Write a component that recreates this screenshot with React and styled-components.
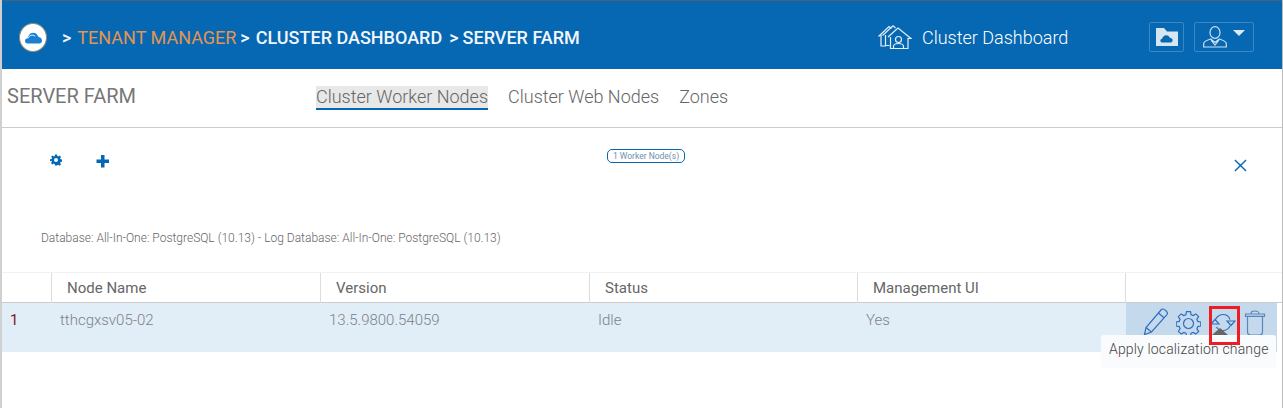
import React from "react";
import styled, { createGlobalStyle } from "styled-components";

const Global = createGlobalStyle`
  html, body { margin: 0; padding: 0; background: #fff; }
  body { font-family: Roboto, "Liberation Sans", sans-serif; width: 1283px; height: 408px; overflow: hidden; }
`;
const Page = styled.div`
  width: 1283px; height: 408px; display: flex; flex-direction: column;
  border-left: 2px solid #d0d0d0; border-right: 1px solid #bbb; box-sizing: border-box; position: relative; overflow: hidden;
`;
const Header = styled.header`
  height: 69px; margin-left: -2px; background: #0667b3; border-top: 1px solid #4d5f70; box-sizing: border-box;
  display: flex; align-items: center; padding: 4px 0 0 19px; color: #fff; flex: none;
`;
const LogoBadge = styled.div`
  width: 28px; height: 29px; border-radius: 50%; background: #fff; border: 1px solid #8f8d7c; box-sizing: border-box;
  display: flex; align-items: center; justify-content: center; flex: none; margin-right: 15px;
`;
const Crumbs = styled.nav`
  display: flex; align-items: center; font-size: 18px; font-weight: 500; white-space: nowrap; flex: none; width: 816px;
`;
const Crumb = styled.span`
  color: ${p => p.$accent ? "#e4954f" : "#f2f6fa"};
  font-weight: ${p => p.$accent ? 400 : 500};
  margin-left: ${p => p.$gap || 0}px;
`;
const DashLink = styled.div`
  display: flex; align-items: center; gap: 10px; font-size: 18px; font-weight: 300; color: #fff; width: 271px; flex: none;
`;
const IconButton = styled.button`
  height: 30px; width: ${p => p.$w}px; background: transparent; border: 1px solid #3d86c2; border-radius: 2px;
  display: flex; align-items: center; justify-content: center; gap: 6px; padding: 0; margin-right: ${p => p.$mr || 0}px;
`;
const Caret = styled.span`
  width: 0; height: 0; border-left: 6.500px solid transparent; border-right: 6.500px solid transparent;
  border-top: 6px solid #dce9f4; margin-top: -8px;
`;
const TabBar = styled.div`
  height: 59px; display: flex; align-items: center; border-bottom: 1px solid #ccc; box-sizing: border-box; flex: none;
`;
const Title = styled.h1`
  margin: 0 0 5px 5px; width: 309px; font-size: 20px; font-weight: 400; color: #777; flex: none;
`;
const Tab = styled.div`
  font-size: 18px; font-weight: 300; color: #666; box-sizing: border-box; height: 24px; line-height: 21px; margin: -1px 20px 0 0;
  ${p => p.$active && "background: #e8e8e8; border-bottom: 2px solid #0667b3;"}
`;
const Tools = styled.section`
  height: 144px; flex: none; display: flex; flex-direction: column; position: relative;
`;
const ToolRow = styled.div`
  display: grid; grid-template-columns: 46px 46px 1fr; padding: 26px 0 0 48px; height: 52px; box-sizing: border-box;
`;
const Badge = styled.span`
  justify-self: start; margin: -5px 0 0 465px; height: 14px; width: 78px; box-sizing: border-box; border: 1px solid #0667b3; border-radius: 5px;
  font-size: 8.5px; line-height: 12px; text-align: center; color: #6f8fac; white-space: nowrap;
`;
const Close = styled.div`
  position: absolute; right: 35px; top: 31px; line-height: 0;
`;
const DbLine = styled.p`
  margin: 51px 0 0 39px; font-size: 12px; font-weight: 300; color: #666;
`;
const HeadRow = styled.div`
  display: grid; grid-template-columns: 49px 269px 269px 268px 268px 1fr; height: 31px; flex: none;
  border-top: 1px solid #f2f2f2; border-bottom: 1px solid #ccc; box-sizing: border-box;
`;
const HeadCell = styled.div`
  font-size: 15px; color: #666; line-height: 31px; padding-left: 15px;
  border-left: ${p => p.$first ? "none" : "1px solid #ddd"};
`;
const BodyRow = styled.div`
  position: relative; display: grid; grid-template-columns: 49px 269px 269px 268px 268px 1fr; height: 49px; background: #e1edf7; flex: none; margin-right: 5px;
`;
const BodyCell = styled.div`
  font-size: 15px; font-weight: ${p => p.$idx ? 400 : 300}; color: ${p => p.$idx ? "#7a1a1a" : "#7d8287"}; line-height: 34px; padding-left: ${p => p.$idx ? 8 : 9}px;
`;
const Actions = styled.div`
  background: #c5d9ec; display: flex; align-items: flex-start; gap: 8px; padding: 4px 0 0 17px; margin-left: 1px;
`;
const Highlight = styled.div`
  position: absolute; z-index: 2; left: 1207px; top: 3px; width: 31px; height: 39px; border: 3px solid #ee1c25; box-sizing: border-box; pointer-events: none;
`;
const Tooltip = styled.div`
  position: absolute; left: 1099px; top: 335px; width: 175px; height: 33px; background: #fafbfc; border-radius: 3px;
  font-size: 14px; font-weight: 300; line-height: 29px; color: #444; padding-left: 8px; box-sizing: border-box; white-space: nowrap; letter-spacing: .16px;
  &::before { content: ""; position: absolute; left: 111px; top: -7px; width: 0; height: 0;
    border-left: 8px solid transparent; border-right: 8px solid transparent; border-bottom: 7px solid #666; }
`;

const Cloud = () => (
  <svg width="17" height="13" viewBox="0 0 20 15">
    <path fill="#1a7fd0" d="M3 14.500C1 14.500 0 13 0 11.500 0 9.500 1.500 8.500 3 8.300 4 5 6 2.500 9 2c3-.5 6 1.500 7 5 2.500.4 4 2 4 4.200 0 2-1.500 3.300-3.500 3.300Z" />
    <path fill="none" stroke="#fff" strokeWidth="1.100" d="M3.500 8.500C5 5 9 3.500 12 6M6.500 1.500C9 0 14 1 15.500 5.500" />
  </svg>
);
const HomeIcon = () => (
  <svg width="34" height="24" viewBox="0 0 34 24" fill="none" stroke="#e6eff7" strokeWidth="1.200">
    <path d="M.5 11.500 11 1.500l2.500 2M3 10v11h5M4.500 10.500 15 .8l2.500 2.200M7.500 10v10.500h4" />
    <path d="M10 12 20 3l13 10.500h-3V23.500H12.500V12" />
    <path d="M15.500 23.500v-2c0-2 2-3 5-3s5 1 5 3v2" />
    <circle cx="20.500" cy="14.500" r="3" />
  </svg>
);
const FolderCloud = () => (
  <svg width="22" height="18" viewBox="0 0 22 18">
    <path fill="#d5e5f2" d="M0 0h8l3 3.500h11V18H0Z" />
    <path fill="#0667b3" d="M6.500 14.500c-2.500 0-3-3.500-.3-3.800C6.700 8.300 9 6.800 11.500 7.500c1.300.4 2 1.300 2.500 2.500 3-.4 3.800 4 .7 4.500Z" />
  </svg>
);
const UserIcon = () => (
  <svg width="24" height="22" viewBox="0 0 24 22" fill="none" stroke="#cfe0ef" strokeWidth="1.200">
    <ellipse cx="12" cy="6.500" rx="5" ry="5.800" />
    <path d="M.7 21v-3.500c0-2 4-3.500 7-4.500l4.300 3.500 4.300-3.500c3 1 7 2.500 7 4.500V21ZM8 14l4 5 4-5" />
  </svg>
);
const Gear = ({ size = 16, color = "#0667b3" }) => (
  <svg width={size} height={size} viewBox="0 0 24 24">
    <path fill={color} fillRule="evenodd" d="M10 1h4l.6 3.200 2 .9L19.300 3.200l2.800 2.800-1.900 2.700.9 2 3.200.6v4l-3.200.6-.9 2 1.900 2.700-2.800 2.800-2.700-1.900-2 .9L14 23h-4l-.6-3.200-2-.9-2.700 1.900-2.800-2.800 1.900-2.700-.9-2L0 14.700v-4l3.200-.6.900-2L2.200 5.400 5 3.200l2.700 1.900 2-.9ZM12 8a4 4 0 1 0 0 8 4 4 0 0 0 0-8Z" />
  </svg>
);
const Plus = () => (
  <svg width="14" height="14" viewBox="0 0 14 14"><path fill="#0667b3" d="M5 1h3.500v4.500H13V9H8.500v4.500H5V9H.5V5.500H5Z" /></svg>
);
const X = () => (
  <svg width="13" height="13" viewBox="0 0 14 14" stroke="#0667b3" strokeWidth="1.500"><path d="M1 1l12 12M13 1 1 13" /></svg>
);
const Pencil = () => (
  <svg width="25" height="29" viewBox="0 0 25 29" fill="none" stroke="#2f6fc0" strokeWidth="1.200">
    <path d="M1.500 27.500l1.500-7L18 3c1-1.200 2.500-1.300 3.500-.4l2 1.700c1 1 1.100 2.400.2 3.500L8.500 25ZM15.500 6l6 5.200M3 20.500 8.500 25" />
  </svg>
);
const GearLine = () => (
  <svg width="25" height="29" viewBox="0 0 25 29" fill="none" stroke="#2f6fc0" strokeWidth="1.200">
    <g transform="translate(0 4)">
      <path d="M10.500.7h4l.6 3 2.100.9 2.600-1.700 2.800 2.800-1.700 2.600.9 2.100 3 .6v4l-3 .6-.9 2.100 1.700 2.600-2.800 2.800-2.600-1.700-2.100.9-.6 2.300h-4l-.6-2.300-2.100-.9-2.600 1.700-2.800-2.800 1.700-2.600-.9-2.100-3-.6v-4l3-.6.9-2.100L2.300 5.700l2.800-2.800 2.600 1.700 2.100-.9Z" />
      <circle cx="12.500" cy="12.500" r="5" />
    </g>
  </svg>
);
const Refresh = () => (
  <svg width="27" height="29" viewBox="0 0 27 29" fill="none" stroke="#2f6fc0" strokeWidth="1.200">
    <path d="M6 14C6.500 10.500 10 7.500 14 7.500c3.500 0 6 2 7 5M21 19c-1.500 3-4 4.500-7 4.500-3 0-5-1-6.500-3.500" />
    <path fill="#c5d9ec" d="M2 17h8l-4-4.500ZM18 14h8l-4 4.500Z" />
  </svg>
);
const Trash = () => (
  <svg width="22" height="29" viewBox="0 0 22 29" fill="none" stroke="#5a86bd" strokeWidth="1.200">
    <path d="M1.500 7h19v2.300h-19ZM7 7c0-2.500 1-3 4-3s4 .5 4 3M3.500 9.300V25c0 2 1 3 3 3h9c2 0 3-1 3-3V9.300" />
  </svg>
);

export default function App() {
  return (
    <>
      <Global />
      <Page>
        <Header>
          <LogoBadge><Cloud /></LogoBadge>
          <Crumbs>
            <Crumb>&gt;</Crumb>
            <Crumb $accent $gap={6}>TENANT MANAGER</Crumb>
            <Crumb $gap={4}>&gt;</Crumb>
            <Crumb $gap={6}>CLUSTER DASHBOARD</Crumb>
            <Crumb $gap={7}>&gt;</Crumb>
            <Crumb $gap={4}>SERVER FARM</Crumb>
          </Crumbs>
          <DashLink><HomeIcon />Cluster Dashboard</DashLink>
          <IconButton $w={35} $mr={10}><FolderCloud /></IconButton>
          <IconButton $w={60}><UserIcon /><Caret /></IconButton>
        </Header>
        <TabBar>
          <Title>SERVER FARM</Title>
          <Tab $active>Cluster Worker Nodes</Tab>
          <Tab>Cluster Web Nodes</Tab>
          <Tab>Zones</Tab>
        </TabBar>
        <Tools>
          <ToolRow>
            <Gear size={12} />
            <Plus />
            <Badge>1 Worker Node(s)</Badge>
          </ToolRow>
          <Close><X /></Close>
          <DbLine>Database: All-In-One: PostgreSQL (10.13) - Log Database: All-In-One: PostgreSQL (10.13)</DbLine>
        </Tools>
        <HeadRow>
          <HeadCell $first />
          <HeadCell>Node Name</HeadCell>
          <HeadCell>Version</HeadCell>
          <HeadCell>Status</HeadCell>
          <HeadCell>Management UI</HeadCell>
          <HeadCell />
        </HeadRow>
        <BodyRow>
          <BodyCell $idx>1</BodyCell>
          <BodyCell>tthcgxsv05-02</BodyCell>
          <BodyCell>13.5.9800.54059</BodyCell>
          <BodyCell>Idle</BodyCell>
          <BodyCell>Yes</BodyCell>
          <Actions><Pencil /><GearLine /><Refresh /><Trash /></Actions>
          <Highlight />
        </BodyRow>
        <Tooltip>Apply localization change</Tooltip>
      </Page>
    </>
  );
}
